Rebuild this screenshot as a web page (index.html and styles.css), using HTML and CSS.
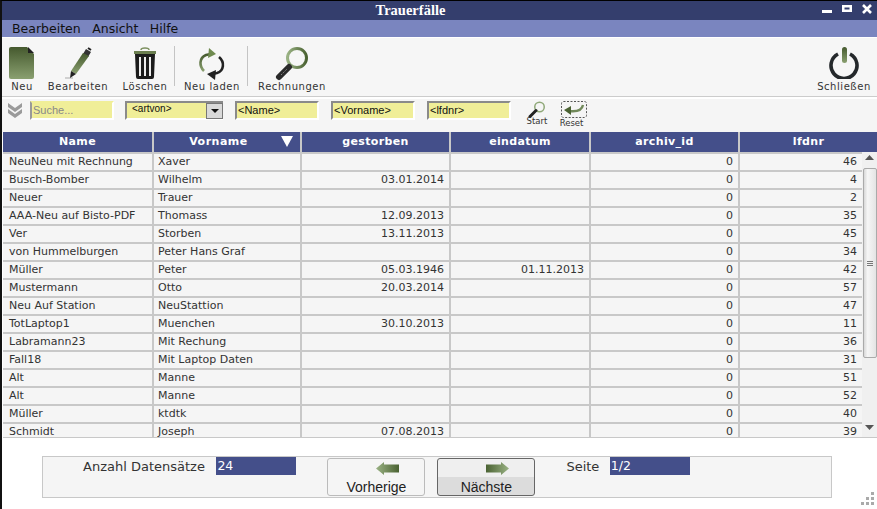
FILE: index.html
```html
<!DOCTYPE html>
<html lang="de">
<head>
<meta charset="utf-8">
<title>Trauerfälle</title>
<link rel="stylesheet" href="styles.css">
</head>
<body>
<svg class="defs" width="0" height="0">
<defs>
<linearGradient id="gv" x1="0" y1="0" x2="0" y2="1"><stop offset="0" stop-color="#45592e"/><stop offset="1" stop-color="#8aa070"/></linearGradient>
<linearGradient id="gl" x1="0" y1="0" x2="1" y2="0"><stop offset="0" stop-color="#9ab284"/><stop offset="1" stop-color="#4a6232"/></linearGradient>
<linearGradient id="gr" x1="0" y1="0" x2="1" y2="0"><stop offset="0" stop-color="#4a6232"/><stop offset="1" stop-color="#9ab284"/></linearGradient>
</defs>
</svg>
<div class="window">
  <header class="titlebar">
    <span class="title">Trauerfälle</span>
    <span class="winctl">
      <svg width="10" height="10" viewBox="0 0 10 10"><rect x="0" y="6" width="10" height="3" fill="#fff"/></svg>
      <svg width="10" height="10" viewBox="0 0 10 10"><path d="M0 1h10v7H0z M2.500 3.500v2h5v-2z" fill="#fff" fill-rule="evenodd"/></svg>
      <svg width="10" height="10" viewBox="0 0 10 10"><path d="M1 1 9 9M9 1 1 9" stroke="#fff" stroke-width="2.600"/></svg>
    </span>
  </header>
  <nav class="menubar"><span>Bearbeiten</span><span>Ansicht</span><span>Hilfe</span></nav>
  <div class="toolbar">
    <div class="tool tool-neu">
      <svg width="26" height="32" viewBox="0 0 26 32"><path d="M2 0h16l7 7v23a2 2 0 0 1-2 2H2a2 2 0 0 1-2-2V2a2 2 0 0 1 2-2z" fill="url(#gv)"/><path d="M19 0l6 6h-6z" fill="#222"/></svg>
      <span>Neu</span>
    </div>
    <div class="tool tool-edit">
      <svg width="32" height="32" viewBox="0 0 32 32"><path d="M3 31h8" stroke="#aaa"/><path d="M24 2l5 3-3 5-5-3z" fill="#333"/><path d="M21 6l6 3-13 18-5-3z" fill="url(#gv)"/><path d="M9 24l5 3-6 4z" fill="#222"/><path d="M26 1l3 2" stroke="#222" stroke-width="2"/></svg>
      <span>Bearbeiten</span>
    </div>
    <div class="tool tool-del">
      <svg width="24" height="32" viewBox="0 0 24 32"><path d="M8 3q0-2 4-2t4 2" fill="none" stroke="#7d9060" stroke-width="1.500"/><path d="M1 4h22v3H1z" fill="#6b7f50"/><path d="M2 7h20l-1 23a2 2 0 0 1-2 2H5a2 2 0 0 1-2-2z" fill="#1c1c1c"/><path d="M7 10v19M12 10v19M17 10v19" stroke="#eee" stroke-width="2"/></svg>
      <span>Löschen</span>
    </div>
    <i class="tsep"></i>
    <div class="tool tool-reload">
      <svg width="28" height="34" viewBox="0 0 28 34"><path d="M6 24C1 19 1 11 8 8l5-1" fill="none" stroke="url(#gv)" stroke-width="2.600"/><path d="M11 1l7 6-8 4z" fill="#6f8a4f"/><path d="M21 10c6 5 5 14-2 16l-5 1" fill="none" stroke="#222" stroke-width="2.600"/><path d="M17 33l-8-6 9-4z" fill="#222"/></svg>
      <span>Neu laden</span>
    </div>
    <i class="tsep"></i>
    <div class="tool tool-calc">
      <svg width="34" height="34" viewBox="0 0 34 34"><circle cx="22" cy="11" r="9.500" fill="#f6f6f6" stroke="url(#gl)" stroke-width="3"/><path d="M14 20 4 30" stroke="#2a2a2a" stroke-width="6" stroke-linecap="round"/><path d="M6 28l6-6" stroke="#888" stroke-width="1" stroke-dasharray="1.500 1"/></svg>
      <span>Rechnungen</span>
    </div>
    <div class="tool tool-close">
      <svg width="30" height="32" viewBox="0 0 30 32"><path d="M9 7a13 13 0 1 0 12 0" fill="none" stroke="#24282b" stroke-width="3.600"/><rect x="13" y="0" width="5" height="16" rx="2.500" fill="url(#gv)"/></svg>
      <span>Schließen</span>
    </div>
  </div>
  <div class="filterbar">
    <svg class="chev" width="16" height="18" viewBox="0 0 16 18"><path d="M1 2l7 5 7-5v4l-7 5-7-5zM1 8l7 5 7-5v4l-7 5-7-5z" fill="#9a9a9a"/></svg>
    <div class="fld fld-search">Suche...</div>
    <div class="fld fld-select"><span>&lt;artvon&gt;</span><b class="drop"><svg width="8" height="4" viewBox="0 0 8 4"><path d="M0 0h8L4 4z" fill="#111"/></svg></b></div>
    <div class="fld">&lt;Name&gt;</div>
    <div class="fld">&lt;Vorname&gt;</div>
    <div class="fld">&lt;lfdnr&gt;</div>
    <div class="mini mini-start">
      <svg width="18" height="17" viewBox="0 0 34 34"><circle cx="22" cy="12" r="9.500" fill="#f5f5f5" stroke="#8fa878" stroke-width="3"/><path d="M15 19 3 31" stroke="#222" stroke-width="6" stroke-linecap="round"/></svg>
      <span>Start</span>
    </div>
    <div class="mini mini-reset">
      <svg width="26" height="17" viewBox="0 0 26 17"><rect x=".5" y=".5" width="25" height="16" rx="2" fill="none" stroke="#555" stroke-dasharray="2 1.500"/><path d="M22 4c-1 5-6 7-14 6" fill="none" stroke="#71895a" stroke-width="2.400"/><path d="M3 9l7-4v9z" fill="#4a6232"/></svg>
      <span>Reset</span>
    </div>
  </div>
  <div class="grid">
    <div class="thead">
      <div>Name</div><div class="sorted">Vorname<svg class="sort" width="12" height="11" viewBox="0 0 12 11"><path d="M0 0h12L6 11z" fill="#fff"/></svg></div><div>gestorben</div><div>eindatum</div><div>archiv_id</div><div>lfdnr</div>
    </div>
    <div class="tbody">
      <div class="rows">
        <div class="row"><div>NeuNeu mit Rechnung</div><div>Xaver</div><div class="r"></div><div class="r"></div><div class="r">0</div><div class="r">46</div></div>
        <div class="row"><div>Busch-Bomber</div><div>Wilhelm</div><div class="r">03.01.2014</div><div class="r"></div><div class="r">0</div><div class="r">4</div></div>
        <div class="row"><div>Neuer</div><div>Trauer</div><div class="r"></div><div class="r"></div><div class="r">0</div><div class="r">2</div></div>
        <div class="row"><div>AAA-Neu auf Bisto-PDF</div><div>Thomass</div><div class="r">12.09.2013</div><div class="r"></div><div class="r">0</div><div class="r">35</div></div>
        <div class="row"><div>Ver</div><div>Storben</div><div class="r">13.11.2013</div><div class="r"></div><div class="r">0</div><div class="r">45</div></div>
        <div class="row"><div>von Hummelburgen</div><div>Peter Hans Graf</div><div class="r"></div><div class="r"></div><div class="r">0</div><div class="r">34</div></div>
        <div class="row"><div>Müller</div><div>Peter</div><div class="r">05.03.1946</div><div class="r">01.11.2013</div><div class="r">0</div><div class="r">42</div></div>
        <div class="row"><div>Mustermann</div><div>Otto</div><div class="r">20.03.2014</div><div class="r"></div><div class="r">0</div><div class="r">57</div></div>
        <div class="row"><div>Neu Auf Station</div><div>NeuStattion</div><div class="r"></div><div class="r"></div><div class="r">0</div><div class="r">47</div></div>
        <div class="row"><div>TotLaptop1</div><div>Muenchen</div><div class="r">30.10.2013</div><div class="r"></div><div class="r">0</div><div class="r">11</div></div>
        <div class="row"><div>Labramann23</div><div>Mit Rechung</div><div class="r"></div><div class="r"></div><div class="r">0</div><div class="r">36</div></div>
        <div class="row"><div>Fall18</div><div>Mit Laptop Daten</div><div class="r"></div><div class="r"></div><div class="r">0</div><div class="r">31</div></div>
        <div class="row"><div>Alt</div><div>Manne</div><div class="r"></div><div class="r"></div><div class="r">0</div><div class="r">51</div></div>
        <div class="row"><div>Alt</div><div>Manne</div><div class="r"></div><div class="r"></div><div class="r">0</div><div class="r">52</div></div>
        <div class="row"><div>Müller</div><div>ktdtk</div><div class="r"></div><div class="r"></div><div class="r">0</div><div class="r">40</div></div>
        <div class="row"><div>Schmidt</div><div>Joseph</div><div class="r">07.08.2013</div><div class="r"></div><div class="r">0</div><div class="r">39</div></div>
      </div>
      <div class="scrollbar">
        <svg width="9" height="5" viewBox="0 0 9 5"><path d="M0 5 4.500 0 9 5z" fill="#555"/></svg>
        <div class="thumb"><i></i><i></i><i></i></div>
        <svg class="down" width="9" height="5" viewBox="0 0 9 5"><path d="M0 0 4.500 5 9 0z" fill="#555"/></svg>
      </div>
    </div>
  </div>
  <div class="footer">
    <div class="panel">
      <span class="lbl lbl-count">Anzahl Datensätze</span>
      <span class="val val-count">24</span>
      <div class="btn btn-prev">
        <svg width="23" height="13" viewBox="0 0 23 13"><path d="M0 6.500 8 0v2.500h15v8H8V13z" fill="url(#gl)"/></svg>
        <span>Vorherige</span>
      </div>
      <div class="btn btn-next">
        <svg width="23" height="13" viewBox="0 0 23 13"><path d="M23 6.500 15 0v2.500H0v8h15V13z" fill="url(#gr)"/></svg>
        <span>Nächste</span>
      </div>
      <span class="lbl lbl-page">Seite</span>
      <span class="val">1/2</span>
    </div>
    <svg class="grip" width="16" height="15" viewBox="0 0 16 15"><path d="M12 1h3v3h-3zM7 6h3v3H7zM12 6h3v3h-3zM2 11h3v3H2zM7 11h3v3H7zM12 11h3v3h-3z" fill="#aaa"/></svg>
  </div>
</div>
</body>
</html>
```
FILE: styles.css
```css
* { box-sizing: border-box; }
html, body { margin: 0; padding: 0; background: #fff; }
body { width: 877px; height: 509px; overflow: hidden; font-family: "DejaVu Sans", Verdana, sans-serif; font-size: 11px; color: #333; }
.defs { position: absolute; }
.window { width: 877px; height: 509px; display: flex; flex-direction: column; border-top: 1px solid #000; border-left: 2px solid #111; background: #fff; position: relative; }

.titlebar { height: 19px; flex: none; background: #343e6d; display: flex; align-items: center; justify-content: center; padding-right: 58px; position: relative; }
.title { font: bold 14.500px "Liberation Serif", serif; color: #fff; }
.winctl { position: absolute; right: 5px; top: 3px; display: flex; gap: 10px; }
.winctl svg { display: block; }

.menubar { height: 17px; flex: none; background: #7a85bf; display: flex; gap: 11.500px; padding-left: 10px; align-items: center; font-size: 12.500px; color: #111; }
.toolbar { height: 59px; flex: none; margin-top: 1px; background: #f6f6f6; border-bottom: 1px solid #ccc; display: flex; align-items: flex-start; position: relative; }
.tool { display: flex; flex-direction: column; align-items: center; font-size: 10px; letter-spacing: .55px; height: 100%; padding-top: 9px; color: #333; }
.tool span { position: absolute; top: 43px; white-space: nowrap; }
.tool-neu { width: 26px; margin-left: 7px; }
.tool-edit { width: 32px; margin-left: 27px; }
.tool-del { width: 24px; margin-left: 39px; }
.tool-reload { width: 28px; margin-left: 23px; }
.tool-calc { width: 34px; margin-left: 27px; }
.tool-close { width: 30px; margin-left: auto; margin-right: 18px; }
.tool-del + .tsep { margin-left: 17px; }
.tsep { width: 1px; height: 40px; background: #c4c4c4; margin: 8px 0 0 21px; flex: none; }

.filterbar { height: 33px; flex: none; margin-top: 2px; background: #f5f5f5; display: flex; align-items: flex-start; padding: 2px 0 0 5px; position: relative; }
.chev { flex: none; }
.fld { width: 84px; height: 19px; margin-left: 12px; background: #f0ee98; border-top: 2px solid #8a8a8a; border-left: 2px solid #8a8a8a; border-right: 2px solid #fff; border-bottom: 2px solid #fff; font-family: "Liberation Sans", sans-serif; font-size: 11px; line-height: 15px; color: #111; padding-left: 1px; white-space: nowrap; overflow: hidden; }
.fld-search { margin-left: 7px; color: #888; border-color: #f0ee98 #fff #fff #999; }
.fld-select { width: 98px; margin-left: 11px; display: flex; justify-content: space-between; line-height: 12px; padding: 0 0 0 5px; border-right: 0; overflow: visible; }
.fld-select span { font-size: 10px; }
.drop { width: 17px; height: 16px; background: #d9d9d9; border: 1px solid #777; display: flex; align-items: center; justify-content: center; }
.mini { display: flex; flex-direction: column; align-items: center; font-size: 8.500px; line-height: 10px; color: #333; }
.mini-start { width: 26px; margin-left: 13px; }
.mini-reset { width: 28px; margin-left: 10px; }
.mini span { margin-top: -2px; }
.mini-reset span { margin: 0 5px 0 0; }

.grid { flex: none; }
.thead, .row { display: grid; grid-template-columns: 149px 146px 147px 138px 147px 1fr; column-gap: 2px; }
.thead { height: 20px; background: #c8c8c8; margin-left: 1px; }
.thead > div { background: #444f8a; color: #fff; font-weight: bold; font-size: 11px; letter-spacing: .35px; text-align: center; line-height: 20px; position: relative; }
.thead .sorted { line-height: 19px; padding-right: 17px; letter-spacing: .5px; }
.sort { position: absolute; right: 7px; top: 4px; }
.tbody { display: flex; height: 286px; margin-left: 1px; border-bottom: 1px solid #c8c8c8; }
.rows { width: 859px; flex: none; overflow: hidden; }
.row { height: 18px; border-top: 2px solid #c8c8c8; background: #c8c8c8; }
.row > div { background: #f5f5f5; padding: 0 5px 0 4px; line-height: 15px; white-space: nowrap; overflow: hidden; color: #333; font-size: 11px; }
.row > div:first-child { padding-left: 6px; }
.row > .r { text-align: right; }
.scrollbar { flex: 1; background: #f0f0f0; display: flex; flex-direction: column; align-items: center; padding-top: 3px; }
.thumb { width: 14px; height: 190px; margin-top: 8px; background: linear-gradient(90deg, #d8d8d8, #f6f6f6 30%, #e4e4e4); border: 1px solid #aaa; border-radius: 2px; display: flex; flex-direction: column; gap: 1px; align-items: center; justify-content: center; }
.thumb i { width: 6px; height: 1px; background: #777; }
.down { margin-top: 67px; }

.footer { flex: 1; position: relative; padding: 18px 0 0 40px; }
.panel { width: 790px; height: 42px; background: #f5f5f5; border: 1px solid #c8c8c8; display: flex; align-items: flex-start; font-size: 13px; color: #333; }
.lbl { margin-top: 2px; line-height: 16px; white-space: nowrap; }
.lbl-count { margin-left: 40px; }
.lbl-page { margin-left: 31px; }
.val { width: 80px; height: 18px; margin: 0 0 0 10.500px; background: #444f8a; color: #fff; font-size: 12.500px; line-height: 18px; padding-left: 1px; }
.val-count { margin-left: 11.500px; }
.btn { width: 98px; height: 38px; margin-top: 1px; border: 1px solid #bbb; border-radius: 3px; background: #f5f5f5; display: flex; flex-direction: column; align-items: center; font: 14px "Liberation Sans", sans-serif; color: #222; padding-top: 3px; }
.btn svg { margin-left: 22px; flex: none; }
.btn span { margin-top: 4px; line-height: 17px; }
.btn-prev { margin-left: 31px; }
.btn-next { margin-left: 12px; border-color: #666; background: linear-gradient(#efefef 0 50%, #dcdcdc 50% 100%); }
.grip { position: absolute; right: 2px; bottom: 3px; }
```
